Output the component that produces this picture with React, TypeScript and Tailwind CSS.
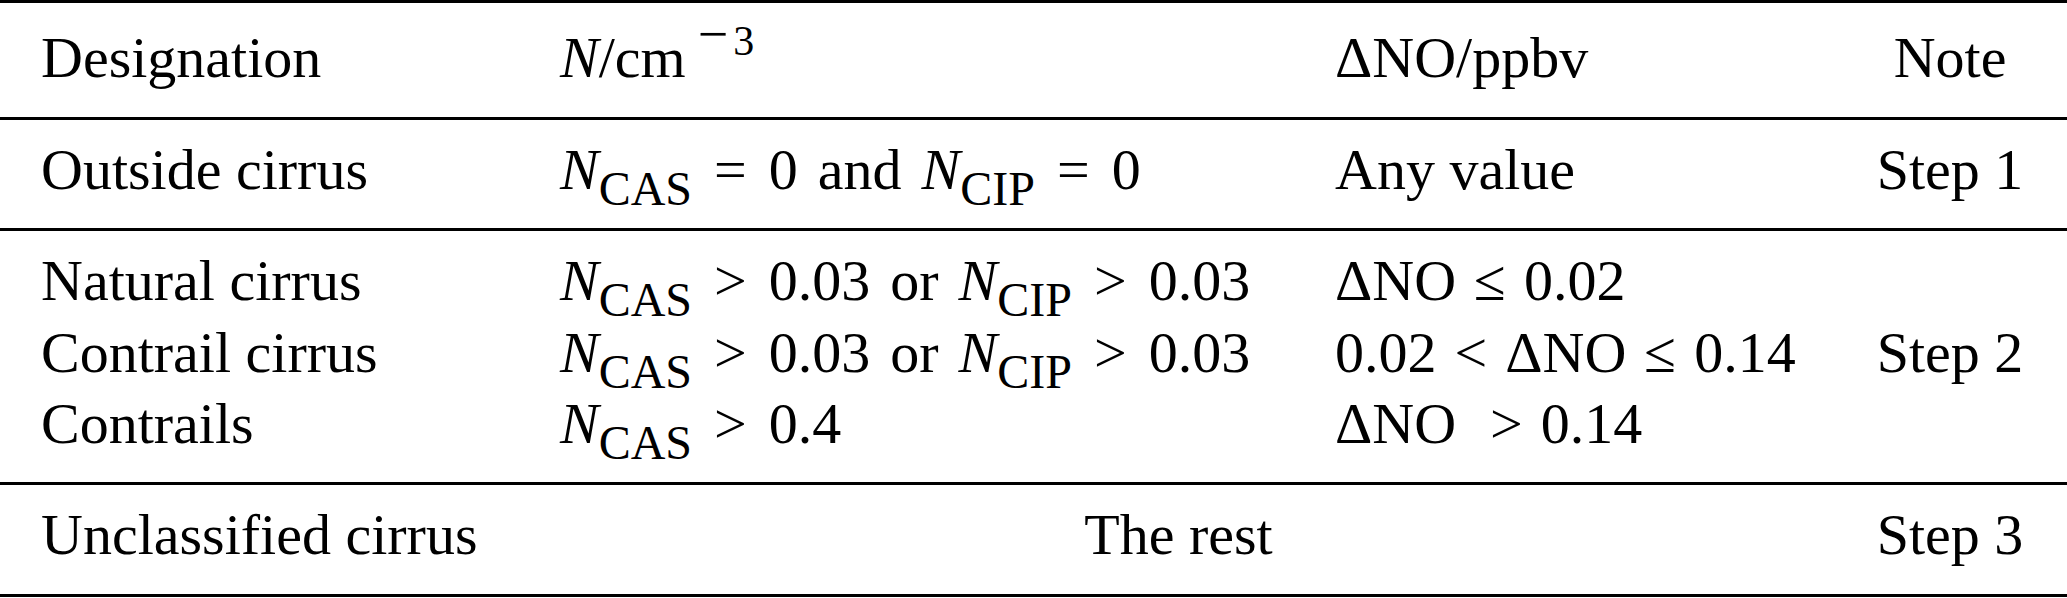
import type { ReactNode } from 'react'

const N = () => <span className="italic">N</span>

const Sub = ({ children }: { children: ReactNode }) => (
  <span className="relative top-[16px] text-[48px] leading-none">{children}</span>
)

// relation symbol with TeX-like thick spacing
const Rel = ({ children, wide }: { children: ReactNode; wide?: boolean }) => (
  <span className={wide ? 'mx-[22px]' : 'mx-[18px]'}>{children}</span>
)

const Word = ({ children }: { children: ReactNode }) => (
  <span className="mx-[20px]">{children}</span>
)

const Cell = ({ children, className = '' }: { children?: ReactNode; className?: string }) => (
  <div className={'whitespace-nowrap px-5 ' + className}>{children}</div>
)

const Note = ({ children, className = '' }: { children?: ReactNode; className?: string }) => (
  <div className={'whitespace-nowrap pl-[36px] pr-[20px] text-center ' + className}>{children}</div>
)

const rowGrid = 'grid grid-cols-[519px_775px_502px_1fr] pl-[21px] border-b-[3px] border-black'

const App = () => {
  return (
    <div className="min-h-[598px] w-[2067px] bg-white font-[family-name:Liberation_Serif,Times_New_Roman,serif] text-[58px] leading-[71.5px] text-black">
      <div className="border-t-[3px] border-black" />

      {/* header */}
      <div className={rowGrid + ' pt-[19px] pb-[23px]'}>
        <Cell>Designation</Cell>
        <Cell>
          <N />
          /cm
          <span className="relative -top-[22px] ml-[12px] text-[42px] leading-none">
            <span className="relative -top-[3px] mr-[5px] text-[54px] leading-none">−</span>3
          </span>
        </Cell>
        <Cell>ΔNO/ppbv</Cell>
        <Note>Note</Note>
      </div>

      {/* step 1 */}
      <div className={rowGrid + ' pt-[14px] pb-[23px]'}>
        <Cell>Outside cirrus</Cell>
        <Cell>
          <N />
          <Sub>CAS</Sub>
          <Rel wide>=</Rel>0<Word>and</Word>
          <N />
          <Sub>CIP</Sub>
          <Rel wide>=</Rel>0
        </Cell>
        <Cell>Any value</Cell>
        <Note>Step 1</Note>
      </div>

      {/* step 2 */}
      <div className={rowGrid + ' pt-[14px] pb-[22.5px]'}>
        <Cell>Natural cirrus</Cell>
        <Cell>
          <N />
          <Sub>CAS</Sub>
          <Rel wide>&gt;</Rel>0.03<Word>or</Word>
          <N />
          <Sub>CIP</Sub>
          <Rel wide>&gt;</Rel>0.03
        </Cell>
        <Cell>
          ΔNO<Rel>≤</Rel>0.02
        </Cell>
        <Note />

        <Cell>Contrail cirrus</Cell>
        <Cell>
          <N />
          <Sub>CAS</Sub>
          <Rel wide>&gt;</Rel>0.03<Word>or</Word>
          <N />
          <Sub>CIP</Sub>
          <Rel wide>&gt;</Rel>0.03
        </Cell>
        <Cell>
          0.02<Rel>&lt;</Rel>ΔNO<Rel>≤</Rel>0.14
        </Cell>
        <Note>Step 2</Note>

        <Cell>Contrails</Cell>
        <Cell>
          <N />
          <Sub>CAS</Sub>
          <Rel wide>&gt;</Rel>0.4
        </Cell>
        <Cell>
          ΔNO<span className="ml-[34px] mr-[18px]">&gt;</span>0.14
        </Cell>
        <Note />
      </div>

      {/* step 3 */}
      <div className={rowGrid + ' pt-[14px] pb-[23px]'}>
        <Cell>Unclassified cirrus</Cell>
        <Cell className="col-span-2 text-center">The rest</Cell>
        <Note>Step 3</Note>
      </div>
    </div>
  )
}

export default App
